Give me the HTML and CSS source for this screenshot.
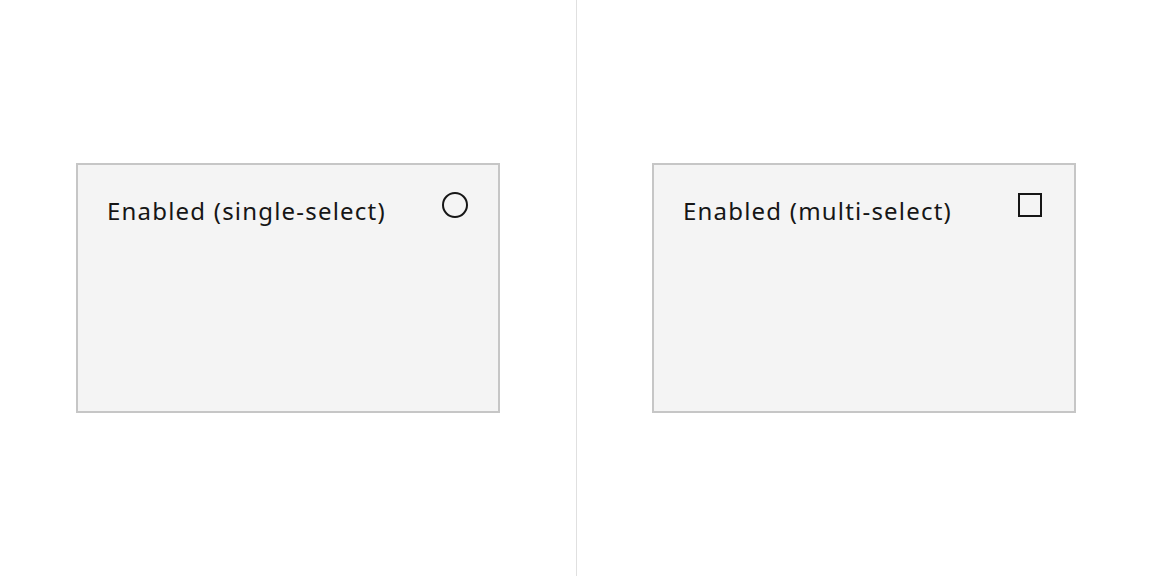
FILE: index.html
```html
<!DOCTYPE html>
<html>
<head>
<meta charset="utf-8">
<link rel="stylesheet" href="styles.css">
</head>
<body>
<div class="stage">
  <section class="panel">
    <div class="tile">
      <span class="label">Enabled (single-select)</span>
      <svg class="icon" width="28" height="28" viewBox="0 0 28 28"><circle cx="14" cy="14" r="12" fill="none" stroke="#161616" stroke-width="2"/></svg>
    </div>
  </section>
  <div class="divider"></div>
  <section class="panel right">
    <div class="tile">
      <span class="label">Enabled (multi-select)</span>
      <svg class="icon sq" width="24" height="24" viewBox="0 0 24 24"><rect x="1" y="1" width="22" height="22" fill="none" stroke="#161616" stroke-width="2"/></svg>
    </div>
  </section>
</div>
</body>
</html>
```
FILE: styles.css
```css
html, body {
  margin: 0;
  padding: 0;
  background: #ffffff;
}
.stage {
  display: grid;
  grid-template-columns: 576px 1px 1fr;
  height: 576px;
  font-family: "Noto Sans", "Open Sans", sans-serif;
}
.panel {
  display: flex;
  align-items: center;
  justify-content: center;
}
.panel.right {
  padding-right: 1px;
}
.divider {
  background: #e0e0e0;
}
.tile {
  box-sizing: border-box;
  width: 424px;
  height: 250px;
  background: #f4f4f4;
  border: 2px solid #c6c6c6;
  display: flex;
  justify-content: space-between;
  align-items: flex-start;
  padding: 28px 29px 0 29px;
}
.label {
  font-size: 24px;
  line-height: 36px;
  color: #161616;
  letter-spacing: 1.2px;
}
.icon {
  display: block;
  margin-top: -2px;
}
.icon.sq {
  margin-top: 0;
  margin-right: 3px;
}
```
